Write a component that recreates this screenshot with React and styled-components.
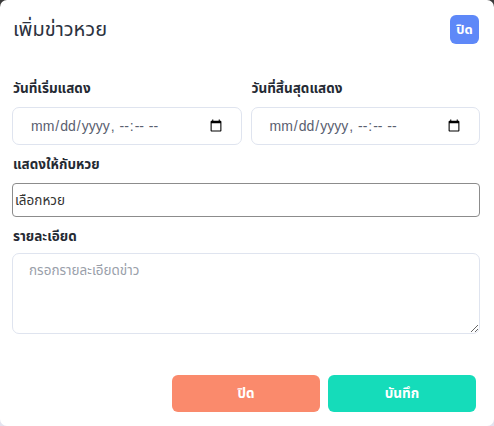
import React from 'react';
import styled, { createGlobalStyle } from 'styled-components';

const Global = createGlobalStyle`
  html, body {
    margin: 0;
    padding: 0;
    background: linear-gradient(#3a3a3a, #9a9aa6 50%, #e4e4f0);
    font-family: "Noto Sans", "Noto Sans Thai", "DejaVu Sans", sans-serif;
  }
`;

const Modal = styled.div`
  width: 494px;
  height: 426px;
  box-sizing: border-box;
  background: #fff;
  border-radius: 7px;
  padding: 15px 14px 14px 12px;
  display: flex;
  flex-direction: column;
`;

const Header = styled.div`
  display: flex;
  justify-content: space-between;
  align-items: center;
  padding-left: 1px;
  height: 29px;
`;

const Title = styled.h2`
  margin: 0;
  font-size: 20px;
  font-weight: 400;
  color: #2b3240;
`;

const Badge = styled.button`
  width: 29px;
  height: 29px;
  border: none;
  border-radius: 6px;
  background: #5e88f8;
  color: #fff;
  font: inherit;
  font-size: 13px;
  font-weight: 700;
  padding: 0;
  margin-right: 1px;
`;

const Row = styled.div`
  display: grid;
  grid-template-columns: minmax(0, 1fr) minmax(0, 1fr);
  gap: 9px;
  margin-top: 34px;
`;

const Field = styled.div`
  display: flex;
  flex-direction: column;
  min-width: 0;
  margin-top: ${p => p.$top || 0}px;
`;

const Label = styled.label`
  font-size: 13.5px;
  font-weight: 700;
  color: #252a33;
  height: 20px;
  line-height: 20px;
  padding-left: 1px;
  margin-bottom: ${p => p.$gap || 10}px;
`;

const DateInput = styled.input`
  width: 100%;
  min-width: 0;
  height: 38px;
  box-sizing: border-box;
  border: 1px solid #dfe4ef;
  border-radius: 7px;
  padding: 0 16px 0 17px;
  font-family: "Liberation Sans", Arial, sans-serif;
  font-size: 14px;
  color: #5a6070;
  background: #fff;
`;

const Select = styled.select`
  height: 34px;
  box-sizing: border-box;
  border: 1px solid #8c8c8c;
  border-radius: 4px;
  padding: 0 2px;
  font: inherit;
  font-size: 13.5px;
  color: #333;
  background: #fff;
  appearance: none;
`;

const TextArea = styled.textarea`
  height: 81px;
  box-sizing: border-box;
  border: 1px solid #dfe4ef;
  border-radius: 7px;
  padding: 7px 16px;
  font: inherit;
  font-size: 13.5px;
  resize: vertical;
  &::placeholder { color: #9aa0aa; }
`;

const Footer = styled.div`
  display: flex;
  justify-content: flex-end;
  gap: 8px;
  margin-top: auto;
  padding-right: 4px;
`;

const Button = styled.button`
  width: 148px;
  height: 37px;
  border: none;
  border-radius: 6px;
  background: ${p => p.$bg};
  color: #fff;
  font: inherit;
  font-size: 13.5px;
  font-weight: 700;
`;

export default function App() {
  return (
    <>
      <Global />
      <Modal>
        <Header>
          <Title>เพิ่มข่าวหวย</Title>
          <Badge>ปิด</Badge>
        </Header>
        <Row>
          <Field>
            <Label $gap={9}>วันที่เริ่มแสดง</Label>
            <DateInput type="datetime-local" />
          </Field>
          <Field>
            <Label $gap={9}>วันที่สิ้นสุดแสดง</Label>
            <DateInput type="datetime-local" />
          </Field>
        </Row>
        <Field $top={9}>
          <Label $gap={9}>แสดงให้กับหวย</Label>
          <Select defaultValue="">
            <option value="">เลือกหวย</option>
          </Select>
        </Field>
        <Field $top={9}>
          <Label $gap={7}>รายละเอียด</Label>
          <TextArea placeholder="กรอกรายละเอียดข่าว" />
        </Field>
        <Footer>
          <Button $bg="#fa8a6c">ปิด</Button>
          <Button $bg="#15dcba">บันทึก</Button>
        </Footer>
      </Modal>
    </>
  );
}
